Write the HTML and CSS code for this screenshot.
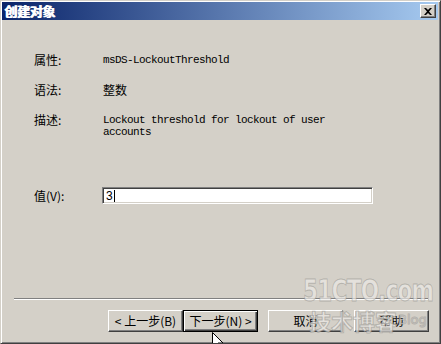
FILE: index.html
```html
<!DOCTYPE html>
<html lang="zh-CN">
<head>
  <meta charset="UTF-8" />
  <meta name="viewport" content="width=device-width, initial-scale=1.0" />
  <title>创建对象</title>
  <link rel="stylesheet" href="styles.css">
</head>
<body>
  <div class="window">
    <div class="titlebar">
      <span class="title">创建对象</span>
      <button class="close" aria-label="关闭">
        <svg width="8" height="7" viewBox="0 0 8 7">
          <path d="M0 0h2l2 2 2-2h2L5 3.5 8 7H6L4 5 2 7H0l3-3.5z" fill="#000" />
        </svg>
      </button>
    </div>

    <div class="body">
      <div class="props">
        <div class="label">属性:</div>
        <div class="value mono">msDS-LockoutThreshold</div>
        <div class="label">语法:</div>
        <div class="value">整数</div>
        <div class="label">描述:</div>
        <div class="value mono">Lockout threshold for lockout of user<br>accounts</div>
      </div>

      <div class="field">
        <label class="label field-label">值(V):</label>
        <div class="input">3<span class="caret"></span></div>
      </div>
    </div>

    <div class="footer">
      <div class="separator"></div>
      <div class="buttons">
        <button class="btn">&lt; 上一步(B)</button>
        <button class="btn default">下一步(N) &gt;</button>
        <button class="btn spaced">取消</button>
        <button class="btn spaced">帮助</button>
      </div>
    </div>

    <!-- watermark and mouse pointer sit over the dialog -->
    <div class="watermark">
      <div class="wm-site">51CTO.com</div>
      <div class="wm-blog">技术博客<span class="wm-en">Blog</span></div>
    </div>
    <svg class="pointer" width="12" height="19" viewBox="0 0 12 19">
      <path d="M0.5 0.5v15l3.5-3.5 3 6.5 2-1-3-6.5h5z" fill="#fff" stroke="#000" stroke-width="1" />
    </svg>
  </div>
</body>
</html>
```

FILE: styles.css
```css
html, body {
  margin: 0;
  padding: 0;
  overflow: hidden;
}
body {
  width: 441px;
  height: 344px;
  background: #d4d0c8;
  font-family: "Noto Sans CJK SC", sans-serif;
  font-size: 12px;
  color: #000;
}
.window {
  position: relative;
  box-sizing: border-box;
  width: 441px;
  height: 344px;
  display: flex;
  flex-direction: column;
  background: #d4d0c8;
  border: 1px solid;
  border-color: #d4d0c8 #404040 #404040 #d4d0c8;
  box-shadow: inset 1px 1px #fff, inset -1px -1px #808080;
  padding: 1px 2px 1px 1px;
  overflow: hidden;
}
.titlebar {
  height: 18px;
  display: flex;
  align-items: center;
  justify-content: space-between;
  background: linear-gradient(to right, #0a246a, #a6caf0);
  padding: 0 2px 0 2px;
}
.title {
  color: #fff;
  font-weight: bold;
  font-size: 13px;
  line-height: 18px;
  letter-spacing: -0.3px;
  text-shadow: 1px 0 0 #fff;
}
.close {
  box-sizing: border-box;
  width: 16px;
  height: 14px;
  padding: 0;
  display: flex;
  align-items: center;
  justify-content: center;
  background: #d4d0c8;
  border: 1px solid;
  border-color: #fff #404040 #404040 #fff;
  box-shadow: inset -1px -1px #808080;
}
.body {
  flex: 1;
  padding: 34px 0 0 32px;
}
.props {
  display: grid;
  grid-template-columns: 69px 1fr;
  row-gap: 18px;
}
.label, .value {
  line-height: 12px;
  white-space: nowrap;
}
.mono {
  font-family: "Liberation Mono", monospace;
  font-size: 11px;
  letter-spacing: -0.6px;
}
.field {
  display: flex;
  align-items: center;
  margin-top: 49px;
}
.field-label {
  width: 68px;
}
.input {
  box-sizing: border-box;
  width: 271px;
  height: 17px;
  display: flex;
  align-items: center;
  padding-left: 3px;
  background: #fff;
  border: 1px solid;
  border-color: #808080 #fff #fff #808080;
  box-shadow: inset 1px 1px #404040, inset -1px -1px #d4d0c8;
  font-family: "Liberation Sans", sans-serif;
  font-size: 12px;
}
.caret {
  width: 1px;
  height: 12px;
  margin-left: 1px;
  background: #000;
}
.footer {
  padding-bottom: 10px;
}
.separator {
  margin: 0 10px 10px 12px;
  border-top: 1px solid #808080;
  border-bottom: 1px solid #fff;
}
.buttons {
  display: flex;
  justify-content: flex-end;
  padding-right: 9px;
}
.btn {
  box-sizing: border-box;
  width: 75px;
  height: 22px;
  padding: 0;
  font-family: "Noto Sans CJK SC", sans-serif;
  font-size: 12px;
  line-height: 12px;
  color: #000;
  background: #d4d0c8;
  border: 1px solid;
  border-color: #fff #404040 #404040 #fff;
  box-shadow: inset -1px -1px #808080;
}
.btn.default {
  border-color: #000;
  box-shadow: inset 1px 1px #fff, inset -1px -1px #404040, inset -2px -2px #808080;
}
.btn.spaced {
  margin-left: 10px;
}
.btn.spaced + .btn.spaced {
  margin-left: 11px;
}
.watermark {
  position: absolute;
  left: 302px;
  top: 275px;
  pointer-events: none;
  color: rgba(236, 234, 230, 0.7);
  -webkit-text-stroke: 1px rgba(120, 118, 114, 0.4);
}
.wm-site {
  font-family: "DejaVu Sans", sans-serif;
  font-weight: 900;
  font-size: 30px;
  line-height: 30px;
  letter-spacing: -1px;
  transform: scaleX(0.72);
  transform-origin: left top;
}
.wm-blog {
  margin: 1px 0 0 6px;
  font-size: 22px;
  line-height: 26px;
  font-weight: bold;
  white-space: nowrap;
}
.wm-en {
  font-family: "DejaVu Sans", sans-serif;
  font-size: 13px;
  vertical-align: top;
  margin-left: 1px;
  font-weight: normal;
}
.pointer {
  position: absolute;
  left: 211px;
  top: 331px;
}
```
